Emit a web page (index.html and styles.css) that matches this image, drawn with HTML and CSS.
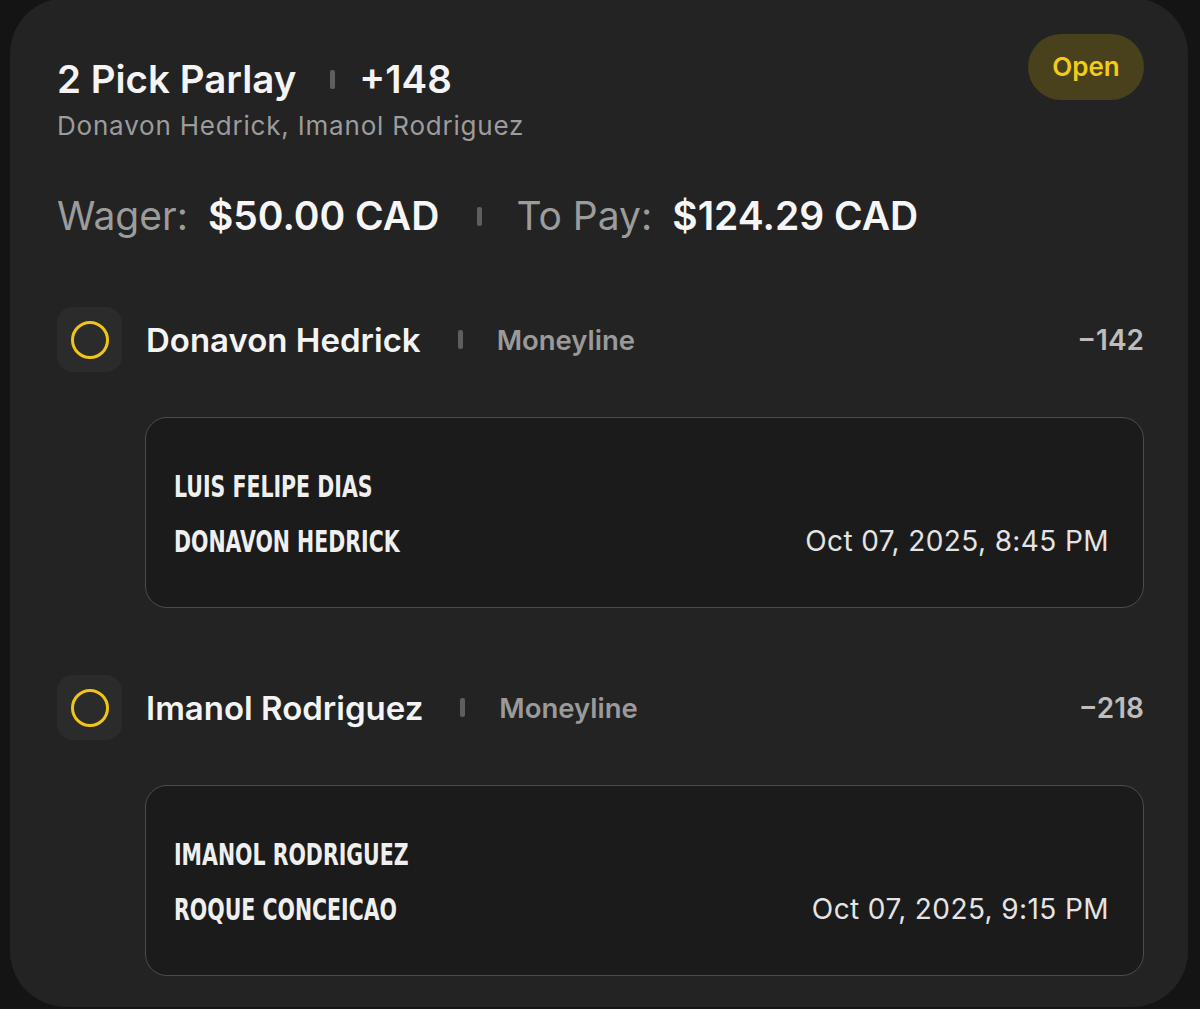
FILE: index.html
```html
<!DOCTYPE html>
<html lang="en">
  <head>
    <meta charset="utf-8" />
    <meta name="viewport" content="width=device-width, initial-scale=1.0" />
    <title>2 Pick Parlay</title>
    <link rel="stylesheet" href="styles.css">
  </head>

  <body>
    <main class="bet-card">
      <header class="bet-header">
        <div class="bet-heading">
          <div class="bet-title">
            <span>2 Pick Parlay</span>
            <i class="sep"></i>
            <span>+148</span>
          </div>
          <div class="bet-sub">Donavon Hedrick, Imanol Rodriguez</div>
        </div>
        <span class="status">Open</span>
      </header>

      <div class="amounts">
        <span class="label">Wager:</span>
        <span class="value">$50.00 CAD</span>
        <i class="sep"></i>
        <span class="label">To Pay:</span>
        <span class="value">$124.29 CAD</span>
      </div>

      <section class="leg">
        <div class="leg-row">
          <div class="leg-icon"><span class="ring"></span></div>
          <span class="leg-name">Donavon Hedrick</span>
          <i class="sep"></i>
          <span class="leg-market">Moneyline</span>
          <span class="leg-odds">−142</span>
        </div>
        <div class="event">
          <div class="event-line"><span class="team">LUIS FELIPE DIAS</span></div>
          <div class="event-line">
            <span class="team">DONAVON HEDRICK</span>
            <span class="event-date">Oct 07, 2025, 8:45 PM</span>
          </div>
        </div>
      </section>

      <section class="leg">
        <div class="leg-row">
          <div class="leg-icon"><span class="ring"></span></div>
          <span class="leg-name">Imanol Rodriguez</span>
          <i class="sep"></i>
          <span class="leg-market">Moneyline</span>
          <span class="leg-odds">−218</span>
        </div>
        <div class="event">
          <div class="event-line"><span class="team">IMANOL RODRIGUEZ</span></div>
          <div class="event-line">
            <span class="team">ROQUE CONCEICAO</span>
            <span class="event-date">Oct 07, 2025, 9:15 PM</span>
          </div>
        </div>
      </section>
    </main>
  </body>
</html>
```

FILE: styles.css
```css
body {
  margin: 0;
  padding: 0;
  background-color: #141414;
  font-family: Inter, "Noto Sans", sans-serif;
  color: #f2f2f2;
  overflow: hidden;
}

.bet-card {
  box-sizing: border-box;
  margin: -2px 12px 0 10px;
  height: 1009px;
  padding: 36px 44px 0 47px;
  background-color: #232323;
  border-radius: 56px;
}

/* header */
.bet-header {
  display: flex;
  justify-content: space-between;
  align-items: flex-start;
}

.bet-heading {
  padding-top: 23px;
}

.bet-title {
  display: flex;
  align-items: center;
  font-size: 38.5px;
  font-weight: 600;
  line-height: 44px;
  color: #f4f4f4;
}

.sep {
  display: inline-block;
  width: 5px;
  height: 19px;
  border-radius: 2px;
  background-color: #5e5e5e;
}

.bet-title .sep {
  margin: 0 24px 0 34px;
}

.bet-sub {
  margin-top: 9px;
  font-size: 26px;
  letter-spacing: 0.8px;
  line-height: 32px;
  color: #9c9c9c;
}

.status {
  width: 116px;
  height: 66px;
  line-height: 66px;
  text-align: center;
  border-radius: 33px;
  background-color: #48411c;
  color: #f3cb1c;
  font-size: 26px;
  font-weight: 600;
}

/* wager / payout */
.amounts {
  display: flex;
  align-items: center;
  margin-top: 51px;
  font-size: 39px;
  line-height: 46px;
}

.amounts .label {
  color: #9c9c9c;
  margin-right: 20px;
}

.amounts .value {
  font-weight: 600;
  color: #f6f6f6;
}

.amounts .sep {
  margin: 0 34px 0 38px;
}

/* legs */
.leg {
  margin-top: 68px;
}

.leg + .leg {
  margin-top: 67px;
}

.leg-row {
  display: flex;
  align-items: center;
}

.leg-icon {
  width: 65px;
  height: 65px;
  border-radius: 16px;
  background-color: #2b2b2b;
  display: flex;
  align-items: center;
  justify-content: center;
  margin-right: 24px;
}

.ring {
  width: 32px;
  height: 32px;
  border: 3px solid #f0c419;
  border-radius: 50%;
}

.leg-name {
  font-size: 33px;
  font-weight: 600;
  color: #f4f4f4;
}

.leg-row .sep {
  margin: 0 34px 0 37px;
}

.leg-market {
  font-size: 27.5px;
  font-weight: 600;
  color: #9a9a9a;
}

.leg-odds {
  margin-left: auto;
  font-size: 28px;
  font-weight: 600;
  color: #bdbdbd;
}

.event {
  margin: 45px 0 0 88px;
  height: 191px;
  box-sizing: border-box;
  padding: 46px 34px 0 28px;
  border: 1.5px solid #4c4c4c;
  border-radius: 22px;
  background-color: #1b1b1b;
}

.event-line {
  display: flex;
  justify-content: space-between;
  align-items: center;
  height: 44px;
}

.event-line + .event-line {
  margin-top: 11px;
}

.team {
  display: inline-block;
  font-family: "DejaVu Sans Condensed", "DejaVu Sans", sans-serif;
  font-weight: 700;
  font-size: 31px;
  color: #efefef;
  transform: scaleX(0.735);
  transform-origin: left center;
}

.event-date {
  font-family: Inter, "Noto Sans", sans-serif;
  font-weight: 400;
  font-size: 28px;
  letter-spacing: 0.4px;
  color: #e4e4e4;
}
```
